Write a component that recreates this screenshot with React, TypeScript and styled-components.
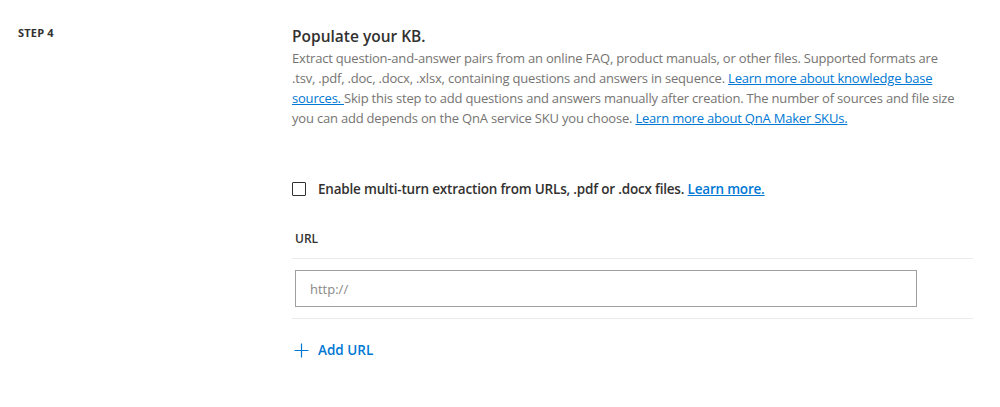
import React from 'react';
import styled, { createGlobalStyle } from 'styled-components';

const GlobalStyle = createGlobalStyle`
  html, body {
    margin: 0;
    padding: 0;
    background: #ffffff;
  }
  body {
    font-family: 'Open Sans', 'Noto Sans', sans-serif;
    color: #323130;
  }
`;

const Page = styled.div`
  display: grid;
  grid-template-columns: 274px 681px;
  padding: 24px 0 0 18px;
  width: 1000px;
  height: 407px;
  box-sizing: border-box;
`;

const StepLabel = styled.div`
  font-size: 11px;
  font-weight: 700;
  letter-spacing: 0.2px;
  padding-top: 1px;
  color: #323130;
`;

const Content = styled.div`
  display: flex;
  flex-direction: column;
`;

const Title = styled.h2`
  margin: 0;
  font-size: 15.5px;
  font-weight: 600;
  line-height: 24px;
  color: #323130;
`;

const Description = styled.p`
  margin: 0;
  width: 668px;
  font-size: 13px;
  letter-spacing: -0.2px;
  line-height: 20px;
  color: #767472;
`;

const TextLink = styled.a`
  color: #0078d4;
  text-decoration: underline;
  cursor: pointer;
`;

const CheckRow = styled.label`
  display: flex;
  align-items: center;
  gap: 12px;
  margin-top: 52px;
  font-size: 13.5px;
  letter-spacing: -0.2px;
  font-weight: 600;
  color: #323130;
  cursor: pointer;
`;

const CheckBox = styled.span`
  width: 14px;
  height: 14px;
  box-sizing: border-box;
  border: 1px solid #323130;
  border-radius: 1px;
  flex-shrink: 0;
`;

const FieldSection = styled.div`
  display: flex;
  flex-direction: column;
  margin-top: 32px;
  width: 681px;
`;

const FieldLabel = styled.div`
  font-size: 12px;
  font-weight: 600;
  padding: 0 0 10px 3px;
  line-height: 18px;
  color: #323130;
  border-bottom: 1px solid #edebe9;
`;

const InputRow = styled.div`
  padding: 11px 0 11px 3px;
  border-bottom: 1px solid #edebe9;
`;

const UrlInput = styled.input`
  width: 622px;
  height: 37px;
  box-sizing: border-box;
  border: 1.5px solid #a19f9d;
  padding: 0 14px;
  font-family: 'Open Sans', 'Noto Sans', sans-serif;
  font-size: 13px;
  color: #323130;
  outline: none;
  &::placeholder {
    color: #8a8886;
  }
`;

const AddButton = styled.button`
  display: flex;
  align-items: center;
  gap: 9px;
  margin-top: 22px;
  padding: 0 0 0 2px;
  border: none;
  background: none;
  font-family: 'Open Sans', 'Noto Sans', sans-serif;
  font-size: 13.5px;
  font-weight: 600;
  color: #0078d4;
  cursor: pointer;
`;

const PlusIcon = () => (
  <svg width="15" height="15" viewBox="0 0 15 15" fill="none">
    <path d="M7.5 0.5v14M0.5 7.5h14" stroke="#0078d4" strokeWidth="1.2" />
  </svg>
);

const App: React.FC = () => {
  return (
    <>
      <GlobalStyle />
      <Page>
        <StepLabel>STEP 4</StepLabel>
        <Content>
          <Title>Populate your KB.</Title>
          <Description>
            Extract question-and-answer pairs from an online FAQ, product manuals, or other files. Supported formats are
            .tsv, .pdf, .doc, .docx, .xlsx, containing questions and answers in sequence.{' '}
            <TextLink>Learn more about knowledge base sources. </TextLink>Skip this step to add questions and answers
            manually after creation. The number of sources and file size you can add depends on the QnA service SKU you
            choose. <TextLink>Learn more about QnA Maker SKUs.</TextLink>
          </Description>

          <CheckRow>
            <CheckBox />
            <span>
              Enable multi-turn extraction from URLs, .pdf or .docx files. <TextLink>Learn more.</TextLink>
            </span>
          </CheckRow>

          <FieldSection>
            <FieldLabel>URL</FieldLabel>
            <InputRow>
              <UrlInput placeholder="http://" />
            </InputRow>
          </FieldSection>

          <AddButton>
            <PlusIcon />
            Add URL
          </AddButton>
        </Content>
      </Page>
    </>
  );
};

export default App;
